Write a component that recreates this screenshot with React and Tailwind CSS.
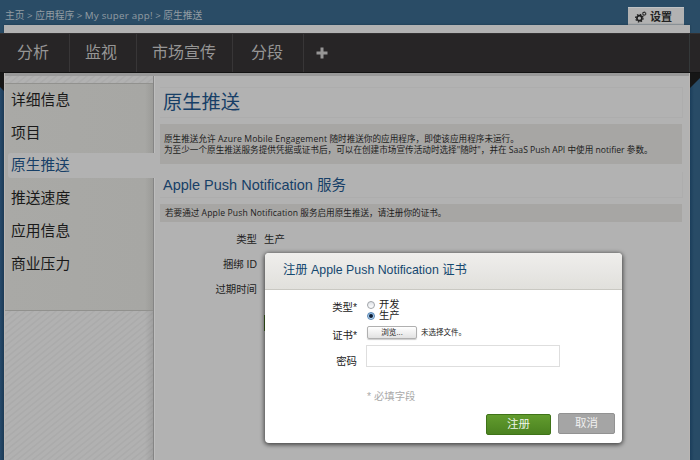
import React from 'react';

const navItems = [
  { label: '分析', box: 'w-[70px] pl-[17px]' },
  { label: '监视', box: 'w-[67px] pl-[15px]' },
  { label: '市场宣传', box: 'w-[96px] pl-[15px]' },
  { label: '分段', box: 'w-[71px] pl-[18px]' },
];

const sideItems = ['详细信息', '项目', '原生推送', '推送速度', '应用信息', '商业压力'];

const hatch =
  'bg-[repeating-linear-gradient(141deg,#b1b1b1_0px,#b1b1b1_2.4px,#ababab_3.2px,#ababab_4px,#b1b1b1_4.8px)]';

function Gears() {
  return (
    <svg className="h-[12px] w-[12px]" viewBox="0 0 12 12" fill="none" stroke="#1f1f1f">
      <circle cx="4.4" cy="7.2" r="2.5" strokeWidth="1.7" />
      <circle cx="4.4" cy="7.2" r="3.7" strokeWidth="1.3" strokeDasharray="1.45 1.45" />
      <circle cx="9.2" cy="2.7" r="1.4" strokeWidth="1" />
      <circle cx="9.2" cy="2.7" r="2" strokeWidth="0.6" strokeDasharray="0.8 0.8" />
    </svg>
  );
}

function Header() {
  return (
    <header className="flex h-[25px] shrink-0 items-end justify-between pl-[5px] pr-[16px]">
      <div className="mb-[2px] whitespace-pre text-[9.75px] leading-[14px] text-[#929ca3]">
        主页 &gt; 应用程序 &gt; <span className="tracking-[0.25px]">My super app!</span> &gt; 原生推送
      </div>
      <div className="flex h-[18px] w-[56px] items-center border-t border-[#c0c3c5] bg-[#b2b2b2] pl-[7px]">
        <Gears />
        <span className="ml-[3px] text-[11px] font-bold leading-[16px] text-[#222]">设置</span>
      </div>
    </header>
  );
}

function Nav() {
  return (
    <nav className="flex h-[40px] shrink-0 border-b border-t border-b-[#131313] border-t-[#333132] bg-[#272526]">
      {navItems.map((item) => (
        <div
          key={item.label}
          className={`${item.box} border-r border-[#383637] text-[16px] leading-[36px] text-[#969595]`}
        >
          {item.label}
        </div>
      ))}
      <div className="flex w-[36px] items-center justify-center">
        <svg className="h-[12px] w-[12px]" viewBox="0 0 12 12">
          <path d="M6 0.5v11M0.5 6h11" stroke="#969595" strokeWidth="3" />
        </svg>
      </div>
      <div className="ml-auto w-[11px] border-l border-[#343839]" />
    </nav>
  );
}

function Sidebar() {
  return (
    <aside className={`flex w-[148px] shrink-0 flex-col ${hatch}`}>
      <div className="mt-[7px] h-[228px] shrink-0 border-b border-t border-[#91918e] bg-[linear-gradient(90deg,#a9a9a6_0px,#a7a7a4_140px,#9b9b98_148px)]">
        {sideItems.map((label, i) => (
          <div key={label} className="flex h-[32.8px] items-center">
            {i === 2 ? (
              <div className="relative ml-[3px] flex h-[25px] w-[151px] shrink-0 items-center rounded-l-[3px] bg-[#b2b2b2] pl-[3px] text-[#173f67]">
                <span className="-mt-[3px] text-[14.7px] leading-[24px]">{label}</span>
              </div>
            ) : (
              <span className="mb-[3px] pl-[6px] text-[14.8px] leading-[24px] text-[#191919]">{label}</span>
            )}
          </div>
        ))}
      </div>
      <div className="ml-auto w-[8px] flex-1 bg-[linear-gradient(90deg,rgba(0,0,0,0),rgba(0,0,0,0.09))]" />
    </aside>
  );
}

function DetailRow({ label, children }) {
  return (
    <div className="flex h-[25px] items-center text-[10.4px] leading-[14px] text-[#222]">
      <span className="w-[103px] pr-[6px] text-right">{label}</span>
      <span className="pl-[1px]">{children}</span>
    </div>
  );
}

function Content() {
  return (
    <main className="flex min-w-0 flex-1 flex-col border-l border-[#858585] bg-[#b2b2b2] pl-[6px] pr-[7px] shadow-[inset_1px_0_0_#bdbdbd]">
      <h1 className="mr-[-1px] mt-[11px] h-[31px] border-b border-r border-t border-[#adadad] pl-[3px] text-[19.3px] leading-[27px] text-[#173f67]">
        原生推送
      </h1>
      <div className="mt-[6px] h-[40px] bg-[#a7a6a4] pl-[4px] pt-[10px] text-[8.62px] leading-[11.4px] text-[#1c1c1c]">
        <p className="whitespace-nowrap">
          原生推送允许 <span className="tracking-[0.18px]">Azure Mobile Engagement</span> 随时推送你的应用程序，即使该应用程序未运行。
        </p>
        <p className="whitespace-nowrap">
          为至少一个原生推送服务提供凭据或证书后，可以在创建市场宣传活动时选择"随时"，并在 SaaS Push API 中使用 notifier 参数。
        </p>
      </div>
      <h2 className="mr-[-1px] mt-[8px] h-[26px] border-b border-r border-[#adadad] pl-[3px] font-['Liberation_Sans','Noto_Sans_CJK_SC',sans-serif] text-[14.5px] leading-[26px] text-[#173f67]">
        Apple Push Notification 服务
      </h2>
      <div className="mt-[6px] h-[18px] whitespace-nowrap bg-[#a7a6a4] pl-[5px] text-[8.6px] leading-[18px] text-[#1c1c1c]">
        若要通过 <span className="tracking-[0.12px]">Apple Push Notification</span> 服务启用原生推送，请注册你的证书。
      </div>
      <div className="mt-[5px] font-['Liberation_Sans','Noto_Sans_CJK_SC',sans-serif]">
        <DetailRow label="类型">生产</DetailRow>
        <DetailRow label="捆绑 ID" />
        <DetailRow label="过期时间" />
      </div>
      <div className="ml-[104px] mt-[13px] h-[16px] w-[60px] bg-[#3f651f]" />
    </main>
  );
}

function Radio({ checked, label }) {
  return (
    <div className="flex h-[11px] items-center">
      <span
        className="flex h-[8px] w-[8px] items-center justify-center rounded-full border border-[#a0a4a8] bg-[linear-gradient(#dfe3e8,#fff)] data-[on=true]:border-[#5b87b3] data-[on=true]:bg-[linear-gradient(#8fbce6,#c5e2fa)]"
        data-on={checked}
      >
        {checked && <span className="h-[4px] w-[4px] rounded-full bg-[#0c1d33]" />}
      </span>
      <span className="ml-[4px] text-[10.3px] leading-[11px]">{label}</span>
    </div>
  );
}

function Dialog() {
  return (
    <div
      role="dialog"
      className="absolute left-[265px] top-[253px] flex h-[190px] w-[357px] flex-col overflow-hidden rounded-[4px] bg-white font-['Liberation_Sans','Noto_Sans_CJK_SC',sans-serif] text-[10.4px] text-[#222] shadow-[0_1px_4px_1px_rgba(0,0,0,0.6)]"
    >
      <div className="h-[37px] shrink-0 border-b border-[#c9c8c2] bg-[linear-gradient(#efeeec,#e1e0dc)] pl-[18px] text-[12.35px] leading-[34px] text-[#15486f]">
        注册 Apple Push Notification 证书
      </div>
      <div className="mt-[9px] flex h-[22px]">
        <span className="w-[92px] text-right leading-[18px]">类型*</span>
        <div className="ml-[10px]">
          <Radio label="开发" checked={false} />
          <Radio label="生产" checked />
        </div>
      </div>
      <div className="mt-[4px] flex h-[15px]">
        <span className="w-[92px] text-right leading-[22px]">证书*</span>
        <button className="ml-[10px] mt-px h-[13px] w-[50px] rounded-[2px] border border-[#b0b0b0] bg-[linear-gradient(#fff,#e2e2e2)] text-[7.6px] leading-[11px] shadow-[0_1px_1px_#ccc]">
          浏览...
        </button>
        <span className="ml-[4px] text-[7.5px] leading-[15px]">未选择文件。</span>
      </div>
      <div className="mt-[5px] flex h-[22px]">
        <span className="w-[92px] text-right leading-[33px]">密码</span>
        <div className="ml-[9px] h-[22px] w-[194px] border border-[#dedede] bg-white" />
      </div>
      <div className="mt-[22px] pl-[102px] leading-[16px] text-[#aaa]">* 必填字段</div>
      <div className="mt-[8px] flex justify-end pr-[7px]">
        <button className="mt-px h-[21px] w-[65px] rounded-[2px] border border-[#3f7318] bg-[linear-gradient(#629c2e,#4b8220)] text-[11.5px] leading-[19px] text-[#eef5e8]">
          注册
        </button>
        <button className="ml-[7px] h-[21px] w-[57px] rounded-[2px] border border-[#929292] bg-[#a5a5a5] text-[11.5px] leading-[19px] text-[#f0f0f0]">
          取消
        </button>
      </div>
    </div>
  );
}

export default function App() {
  return (
    <div className="relative flex h-[460px] w-[700px] flex-col overflow-hidden bg-[#2a4c66] font-['Open_Sans','Noto_Sans_CJK_SC',sans-serif]">
      <Header />
      <div className="ml-[4px] mr-[10px] h-[8px] shrink-0 bg-[#b2b2b2] shadow-[0_0_2px_#183246]" />
      <Nav />
      <div className="flex min-h-0 flex-1">
        <div className="w-[4px] shrink-0 bg-[linear-gradient(90deg,#26496a,#1b3a55)]">
          <svg className="block h-[18px] w-[4px]" viewBox="0 0 4 18">
            <path d="M0 0H4V18L0 14Z" fill="#161616" />
          </svg>
        </div>
        <div className="flex w-[686px] shrink-0 flex-col border-l border-r border-[#b9b5b2] bg-[#b2b2b2]">
          <div className="h-[3px] shrink-0 bg-[#999]" />
          <div className="flex min-h-0 flex-1">
            <Sidebar />
            <Content />
          </div>
        </div>
        <div className="w-[10px] shrink-0 bg-[linear-gradient(90deg,#1b3e5b,#284b66_4px)]">
          <svg className="block h-[15px] w-[10px]" viewBox="0 0 10 15">
            <path d="M0 0H10V5L0 15Z" fill="#161616" />
          </svg>
        </div>
      </div>
      <Dialog />
    </div>
  );
}
